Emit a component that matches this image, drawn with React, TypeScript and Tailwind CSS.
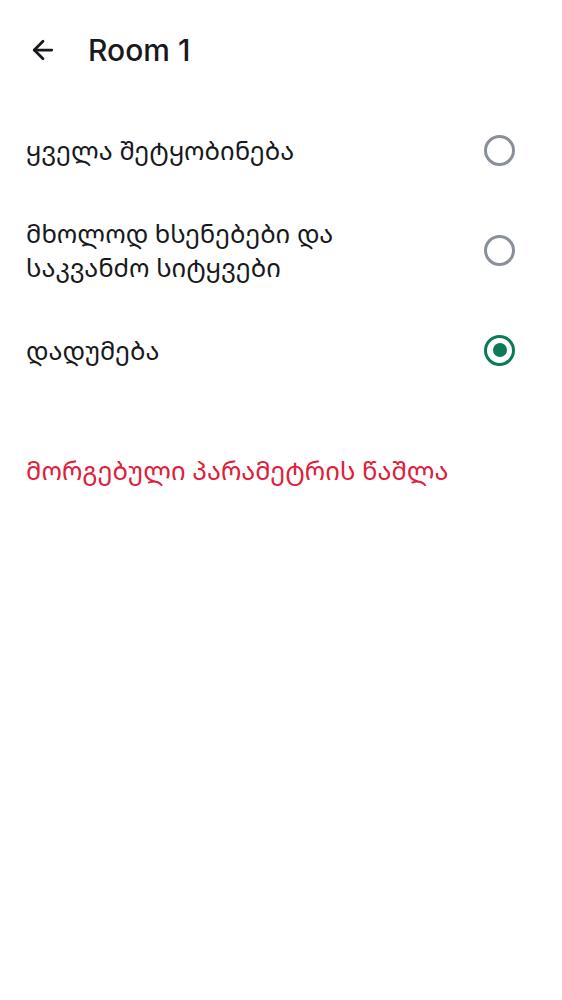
import { useState } from 'react'
import { ArrowLeft } from 'lucide-react'

interface Option {
  id: string
  label: string
}

const options: Option[] = [
  { id: 'all', label: 'ყველა შეტყობინება' },
  { id: 'mentions', label: 'მხოლოდ ხსენებები და საკვანძო სიტყვები' },
  { id: 'mute', label: 'დადუმება' }
]

function Radio({ checked }: { checked: boolean }) {
  return (
    <span
      className={`w-[31px] h-[31px] rounded-full border-[3px] flex items-center justify-center flex-shrink-0 ${
        checked ? 'border-[#0b7a5a]' : 'border-[#8a9099]'
      }`}
    >
      {checked && <span className="w-[14px] h-[14px] rounded-full bg-[#0b7a5a]" />}
    </span>
  )
}

export default function App() {
  const [selected, setSelected] = useState('mute')

  return (
    <div className="w-[562px] min-h-[1000px] bg-white text-[#17191c] font-['Noto_Sans_Georgian','DejaVu_Sans',sans-serif]">
      {/* Header */}
      <div className="flex items-center h-[100px] px-[28px] gap-[30px] font-['Inter',sans-serif]">
        <ArrowLeft className="w-[30px] h-[30px]" strokeWidth={2.2} />
        <h1 className="text-[30px] font-medium">Room 1</h1>
      </div>

      {/* Options */}
      <div>
        {options.map((opt) => (
          <button
            key={opt.id}
            onClick={() => setSelected(opt.id)}
            className="w-full flex items-center justify-between pl-[26px] pr-[47px] py-[16px] min-h-[100px] text-left"
          >
            <span className="text-[25.5px] leading-[34px] max-w-[345px]">{opt.label}</span>
            <Radio checked={selected === opt.id} />
          </button>
        ))}
      </div>

      {/* Reset */}
      <button className="mt-[53px] px-[26px] text-[25.5px] leading-[34px] text-[#e0203a] text-left">
        მორგებული პარამეტრის წაშლა
      </button>
    </div>
  )
}
